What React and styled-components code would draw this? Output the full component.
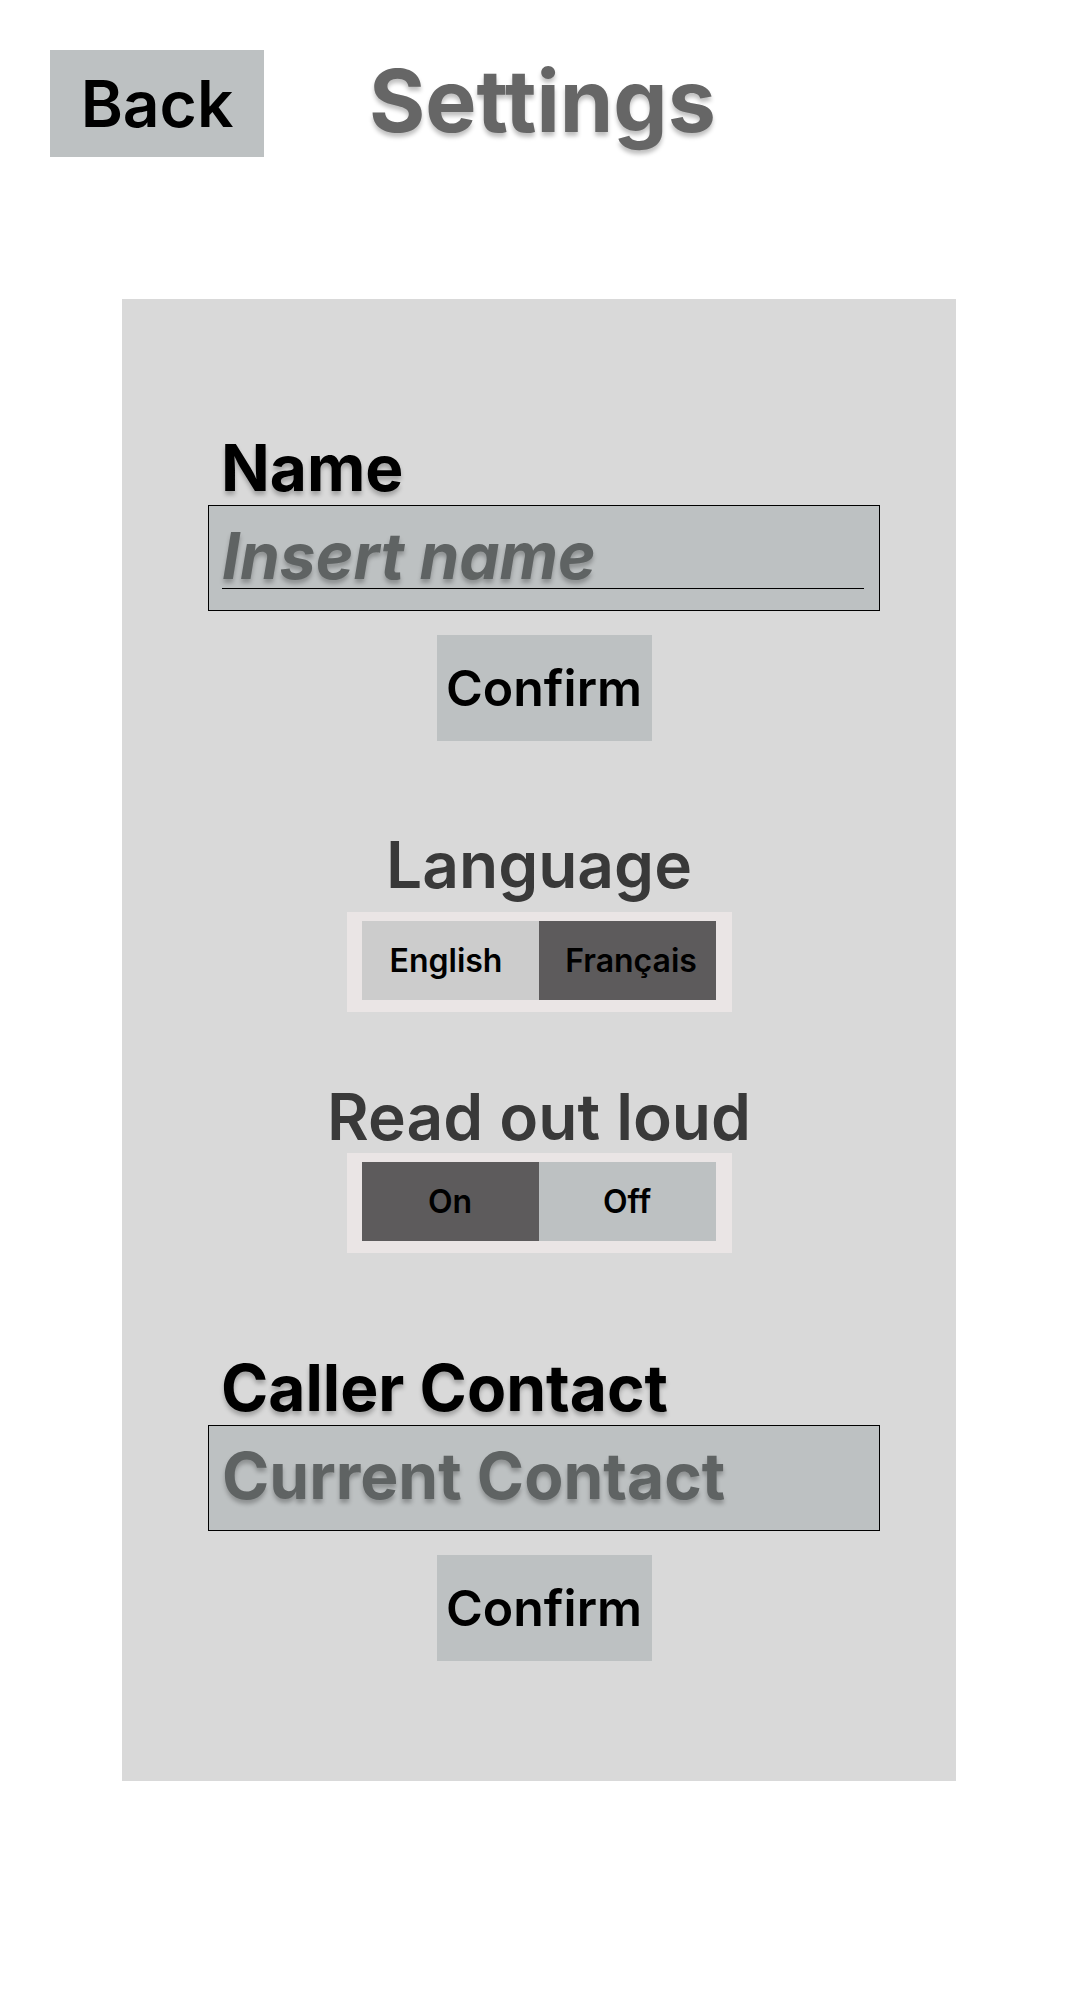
import React, { useState } from "react"
import styled, { createGlobalStyle } from "styled-components"

const GlobalStyle = createGlobalStyle`
  body {
    margin: 0;
    background: #ffffff;
    font-family: Inter, "Noto Sans", sans-serif;
  }
`

const Page = styled.div`
  width: 1080px;
  min-height: 2000px;
  display: flex;
  flex-direction: column;
`

const Header = styled.header`
  display: flex;
  align-items: center;
  gap: 105px;
  padding: 50px 0 0 50px;
`

const BackButton = styled.button`
  width: 214px;
  height: 107px;
  border: none;
  background: #bdc1c2;
  color: #000;
  font-family: Inter, sans-serif;
  font-size: 64px;
  font-weight: 600;
  padding: 0;
  cursor: pointer;
`

const Title = styled.h1`
  margin: -6px 0 0;
  font-size: 86px;
  font-weight: 700;
  color: #666666;
  text-shadow: 0 4px 4px rgba(0, 0, 0, 0.25);
`

const Panel = styled.main`
  width: 834px;
  margin: 142px 0 0 122px;
  padding: 131px 0 120px;
  background: #d9d9d9;
  display: flex;
  flex-direction: column;
  align-items: center;
`

const Field = styled.section`
  width: 672px;
  margin: ${(p) => p.$top || 0}px 0 0 10px;
  display: flex;
  flex-direction: column;
  align-items: center;
`

const Label = styled.h2`
  align-self: stretch;
  margin: 0;
  padding-left: 13px;
  font-size: 64px;
  line-height: 75px;
  font-weight: 700;
  color: #000;
  text-shadow: 0 4px 4px rgba(0, 0, 0, 0.25);
`

const InputBox = styled.div`
  align-self: stretch;
  height: 106px;
  box-sizing: border-box;
  border: 1px solid #000;
  background: #bdc1c2;
  padding: 14px 15px 0 13px;
`

const InputText = styled.div`
  height: 64px;
  padding-top: 4px;
  line-height: 64px;
  border-bottom: 1px solid ${(p) => (p.$underline ? "#000" : "transparent")};
  font-size: 64px;
  font-weight: 700;
  font-style: ${(p) => (p.$italic ? "italic" : "normal")};
  color: #5f6363;
  text-shadow: 0 4px 4px rgba(0, 0, 0, 0.25);
  white-space: nowrap;
`

const ConfirmButton = styled.button`
  margin-top: 24px;
  width: 215px;
  height: 106px;
  border: none;
  padding: 0;
  background: #bdc1c2;
  color: #000;
  font-family: Inter, sans-serif;
  font-size: 50px;
  font-weight: 600;
  cursor: pointer;
`

const Heading = styled.h2`
  margin: ${(p) => p.$top}px 0 0;
  font-size: 64px;
  line-height: 72px;
  font-weight: 600;
  color: #393939;
`

const Toggle = styled.div`
  margin-top: ${(p) => p.$top || 0}px;
  display: flex;
  padding: 9px 16px 12px 15px;
  background: #eae5e5;
`

const ToggleOption = styled.button`
  width: 177px;
  height: 79px;
  border: none;
  padding: 0 ${(p) => p.$padRight || 0}px 0 ${(p) => p.$padLeft || 0}px;
  font-family: Inter, sans-serif;
  font-size: 32px;
  font-weight: 600;
  color: #000;
  background: ${(p) => (p.$active ? "#5d5b5c" : p.$tone)};
  cursor: pointer;
`

export default function App() {
  const [language, setLanguage] = useState("fr")
  const [readAloud, setReadAloud] = useState(true)

  return (
    <Page>
      <GlobalStyle />
      <Header>
        <BackButton>Back</BackButton>
        <Title>Settings</Title>
      </Header>

      <Panel>
        <Field>
          <Label>Name</Label>
          <InputBox>
            <InputText $italic $underline>Insert name</InputText>
          </InputBox>
          <ConfirmButton>Confirm</ConfirmButton>
        </Field>

        <Heading $top={88}>Language</Heading>
        <Toggle $top={11}>
          <ToggleOption
            $tone="#cccccc"
            $padRight={8}
            $active={language === "en"}
            onClick={() => setLanguage("en")}
          >
            English
          </ToggleOption>
          <ToggleOption
            $tone="#cccccc"
            $padLeft={8}
            $active={language === "fr"}
            onClick={() => setLanguage("fr")}
          >
            Français
          </ToggleOption>
        </Toggle>

        <Heading $top={69}>Read out loud</Heading>
        <Toggle>
          <ToggleOption $tone="#bdc1c2" $active={readAloud} onClick={() => setReadAloud(true)}>
            On
          </ToggleOption>
          <ToggleOption $tone="#bdc1c2" $active={!readAloud} onClick={() => setReadAloud(false)}>
            Off
          </ToggleOption>
        </Toggle>

        <Field $top={97}>
          <Label>Caller Contact</Label>
          <InputBox>
            <InputText>Current Contact</InputText>
          </InputBox>
          <ConfirmButton>Confirm</ConfirmButton>
        </Field>
      </Panel>
    </Page>
  )
}
